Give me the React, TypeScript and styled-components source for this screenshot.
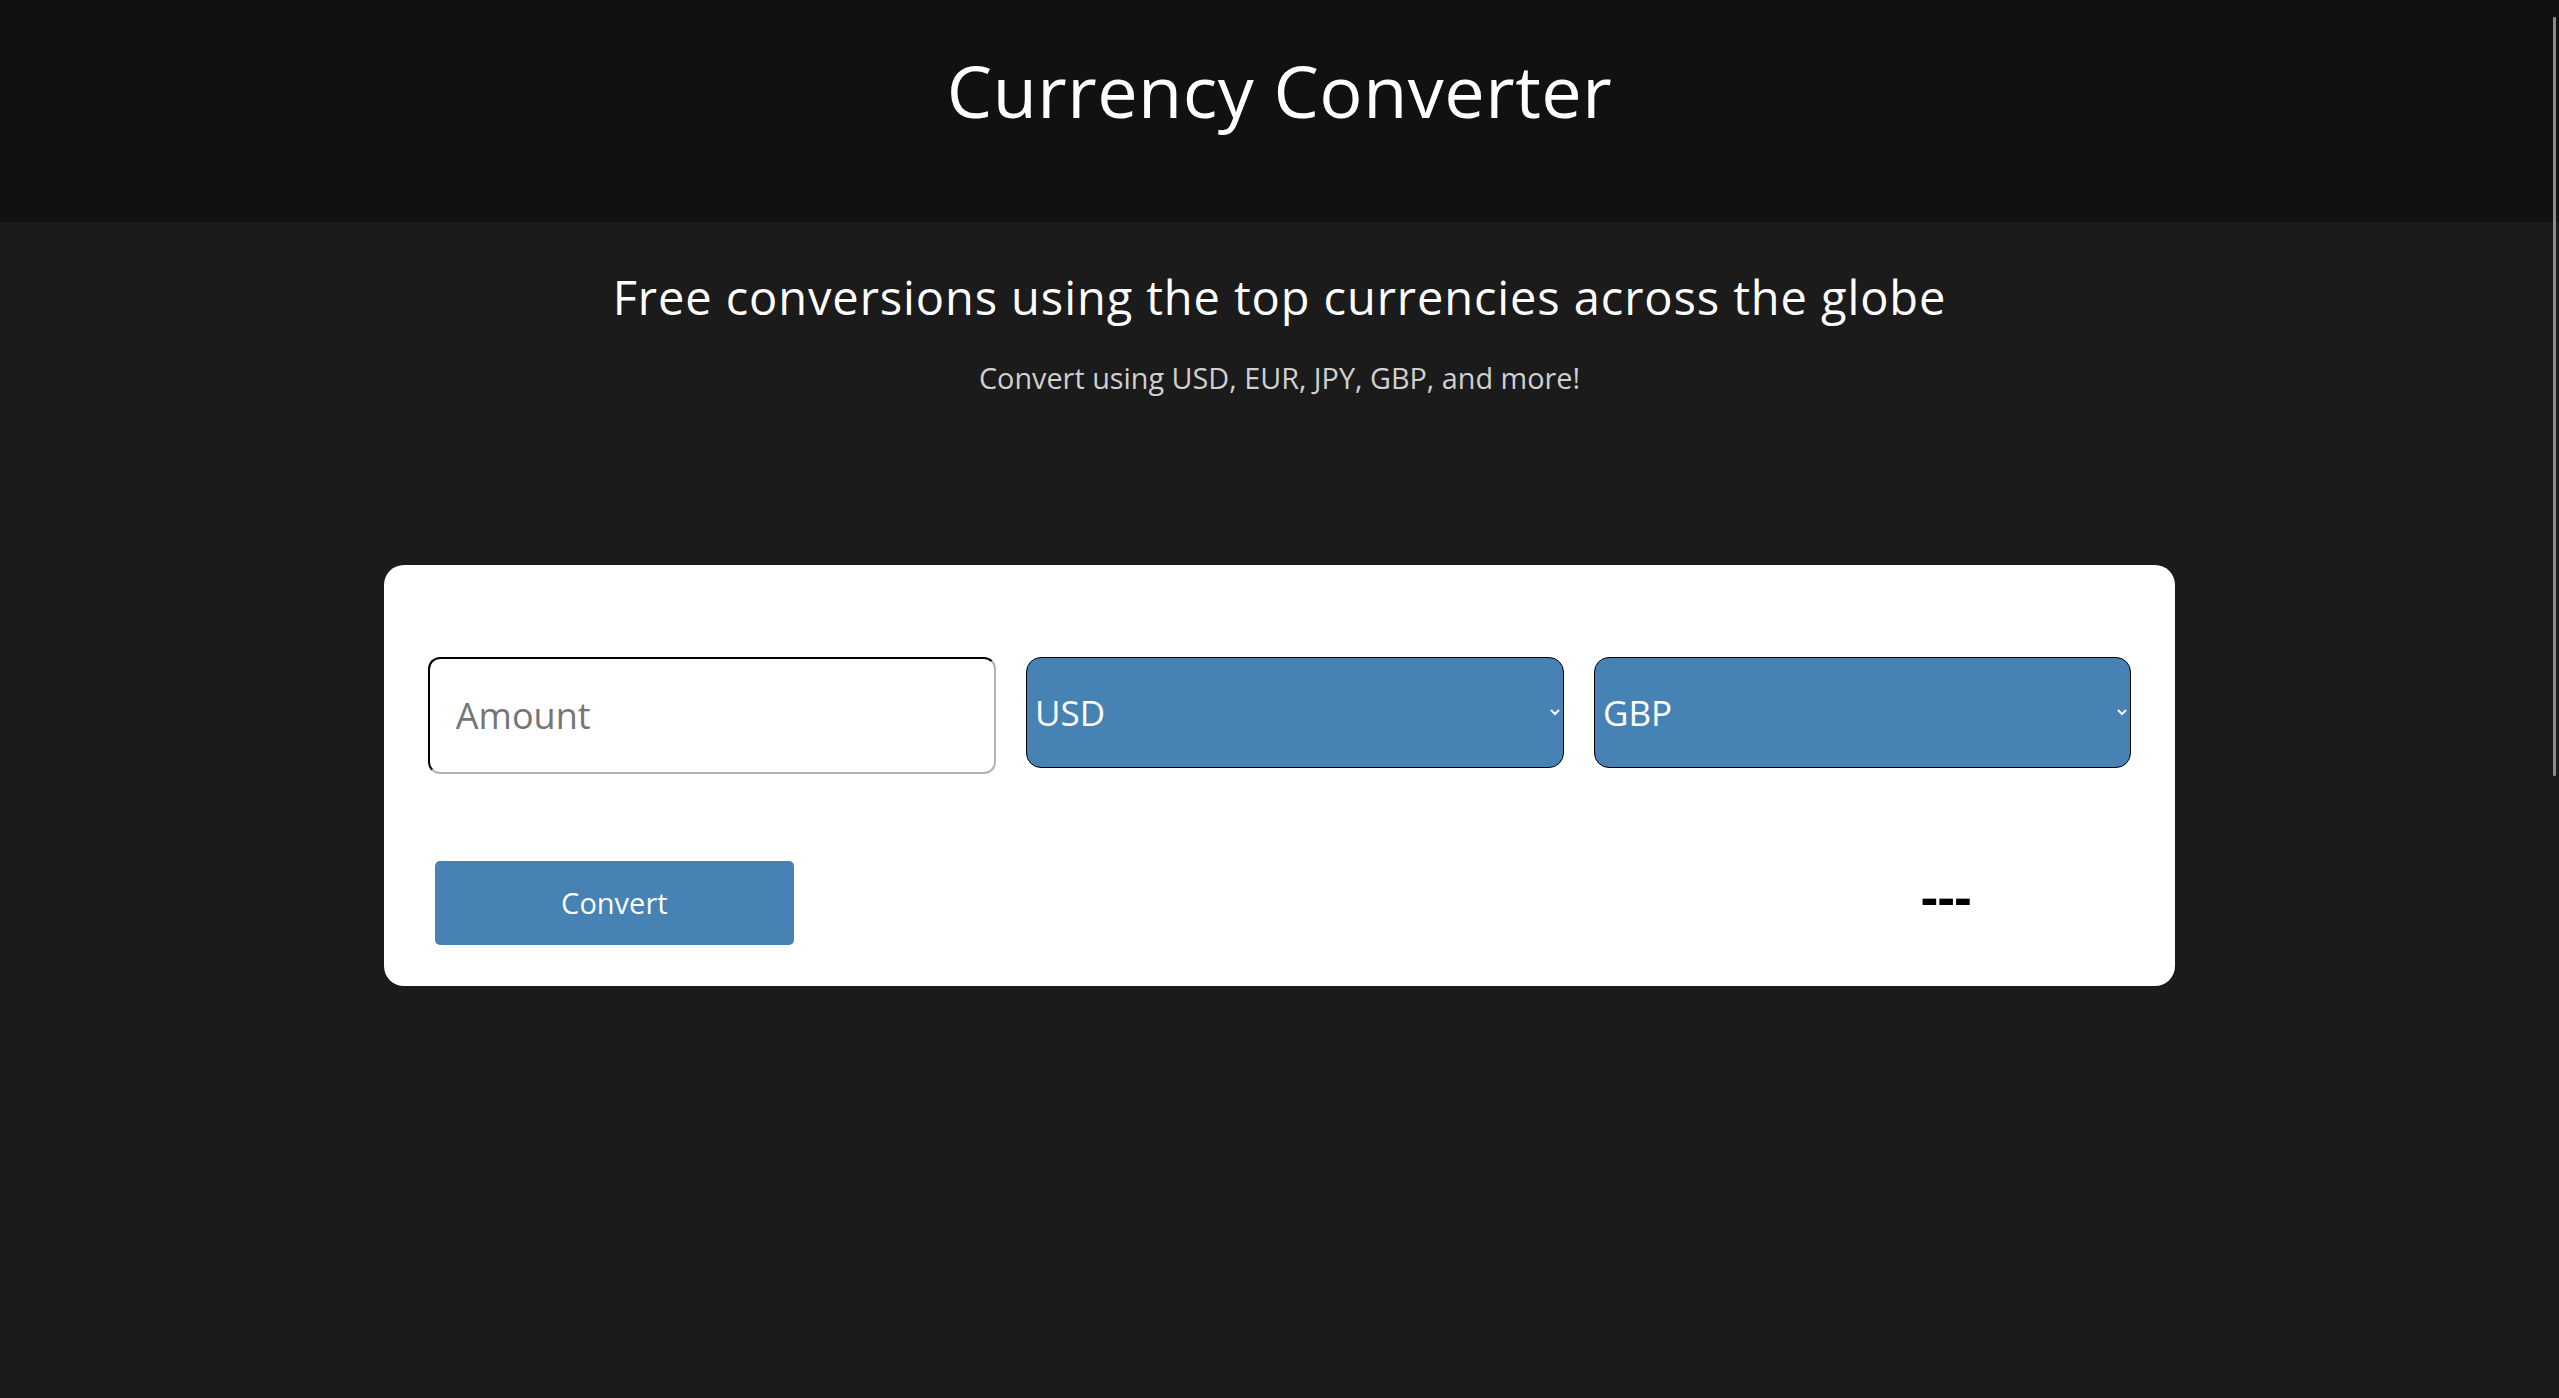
import React from "react";
import styled, { createGlobalStyle } from "styled-components";

const GlobalStyle = createGlobalStyle`
  html, body {
    margin: 0;
    padding: 0;
    background: #1b1b1b;
    font-family: "Open Sans", "Noto Sans", sans-serif;
  }
  * { box-sizing: border-box; }
`;

const Page = styled.div`
  min-height: 100vh;
  background: #1b1b1b;
`;

const Header = styled.header`
  background: #111111;
  height: 222px;
  padding-top: 41px;
  text-align: center;
`;

const Title = styled.h1`
  margin: 0;
  color: #ffffff;
  font-size: 72px;
  letter-spacing: 0.5px;
  font-weight: 400;
  line-height: normal;
`;

const Intro = styled.section`
  text-align: center;
  padding-top: 43px;
`;

const Subtitle = styled.h2`
  margin: 0;
  color: #ffffff;
  font-size: 47px;
  letter-spacing: 0.9px;
  font-weight: 400;
  line-height: normal;
`;

const Tagline = styled.p`
  margin: 29px 0 0;
  color: #d0d0d0;
  font-size: 28.8px;
  font-weight: 400;
  line-height: normal;
`;

const Card = styled.form`
  width: 70%;
  margin: 168px auto 0;
  background: #ffffff;
  border-radius: 20px;
  padding: 92px 44px 41px;
  display: flex;
  flex-direction: column;
  gap: 86px;
`;

const Fields = styled.div`
  display: grid;
  grid-template-columns: 568fr 538fr 537fr;
  column-gap: 30px;
  align-items: start;
`;

const AmountInput = styled.input`
  height: 117px;
  width: 100%;
  border: 2px inset #767676;
  border-top-color: #444444;
  border-left-color: #444444;
  border-bottom-color: #b3b3b3;
  border-right-color: #b3b3b3;
  border-radius: 12px;
  padding: 0 24px 0 26px;
  font-family: "Open Sans", sans-serif;
  font-size: 36px;
  color: #333;
  background: #fff;
  outline: none;
  &::placeholder {
    color: #757575;
  }
`;

const CurrencySelect = styled.select`
  height: 111px;
  width: 100%;
  background-color: #4682b4;
  color: #ffffff;
  border: 1px solid #000000;
  border-radius: 15px;
  padding: 0 6px 0 4px;
  font-family: "Open Sans", sans-serif;
  font-size: 35px;
  outline: none;
`;

const Actions = styled.div`
  display: flex;
  align-items: center;
  justify-content: space-between;
`;

const ConvertButton = styled.button`
  margin-left: 7px;
  width: 359px;
  height: 84px;
  background: #4682b4;
  color: #ffffff;
  border: none;
  border-radius: 5px;
  font-family: "Open Sans", sans-serif;
  font-size: 29px;
  cursor: pointer;
`;

const Result = styled.div`
  margin-right: 160px;
  margin-bottom: 14px;
  color: #000000;
  font-size: 52px;
  font-weight: 700;
  line-height: normal;
`;

const ScrollThumb = styled.div`
  position: fixed;
  top: 17px;
  right: 3px;
  width: 3px;
  height: 759px;
  background: #8c8c8c;
  border-radius: 1px;
`;

const currencies = ["USD", "EUR", "JPY", "GBP", "AUD", "CAD", "CHF", "CNY"];

export default function App() {
  return (
    <Page>
      <GlobalStyle />
      <Header>
        <Title>Currency Converter</Title>
      </Header>
      <Intro>
        <Subtitle>Free conversions using the top currencies across the globe</Subtitle>
        <Tagline>Convert using USD, EUR, JPY, GBP, and more!</Tagline>
      </Intro>
      <Card onSubmit={(e) => e.preventDefault()}>
        <Fields>
          <AmountInput type="text" placeholder="Amount" />
          <CurrencySelect defaultValue="USD">
            {currencies.map((c) => (
              <option key={c} value={c}>{c}</option>
            ))}
          </CurrencySelect>
          <CurrencySelect defaultValue="GBP">
            {currencies.map((c) => (
              <option key={c} value={c}>{c}</option>
            ))}
          </CurrencySelect>
        </Fields>
        <Actions>
          <ConvertButton type="submit">Convert</ConvertButton>
          <Result>---</Result>
        </Actions>
      </Card>
      <ScrollThumb />
    </Page>
  );
}
